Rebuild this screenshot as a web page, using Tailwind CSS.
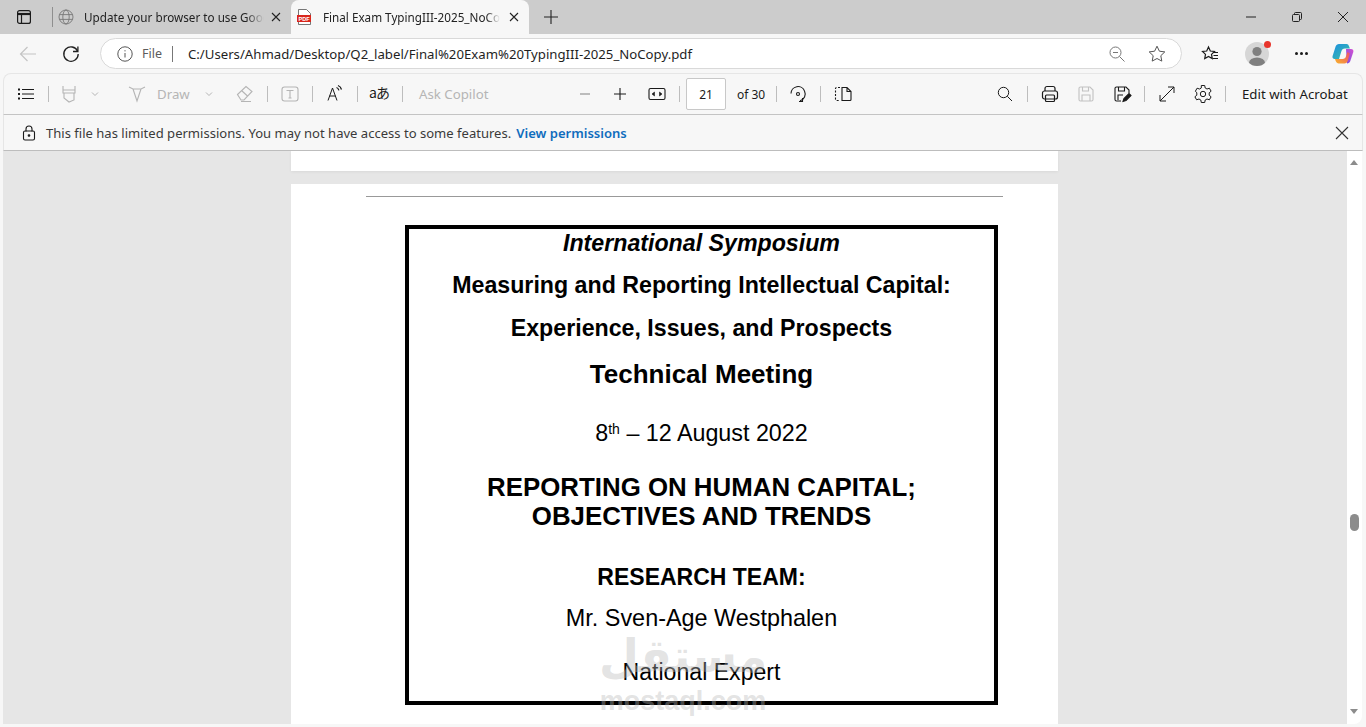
<!DOCTYPE html>
<html>

<head>
    <meta charset="UTF-8">
    <meta name="viewport" content="width=device-width, initial-scale=1.0">
    <title>Final Exam TypingIII-2025_NoCopy.pdf</title>
    <script src="https://cdn.jsdelivr.net/npm/@tailwindcss/browser@4"></script>
</head>

<body class="h-screen overflow-hidden bg-[#f7f7f7] font-['Noto_Sans',sans-serif] text-[#1a1a1a]">
    <div class="relative flex h-[727px] flex-col overflow-hidden">

        <!-- tab strip -->
        <div class="flex h-[34px] shrink-0 items-center bg-[#cccccc]">
            <svg class="ml-[16px] h-[16px] w-[16px]" viewBox="0 0 16 16" fill="none" stroke="#1a1a1a" stroke-width="1.2"><rect x="1.6" y="1.6" width="12.8" height="12.8" rx="2"/><path d="M1.6 5h12.8" stroke-width="2.2"/><path d="M5.5 5v9.4"/></svg>
            <div class="ml-[20px] h-[20px] w-px bg-[#8f8f8f]"></div>
            <svg class="ml-[5px] h-[16px] w-[16px]" viewBox="0 0 16 16" fill="none" stroke="#777" stroke-width="0.9"><circle cx="8" cy="8" r="7"/><ellipse cx="8" cy="8" rx="3.2" ry="7"/><path d="M1.4 5.6h13.2M1.4 10.4h13.2"/></svg>
            <div class="ml-[10px] w-[180px] overflow-hidden whitespace-nowrap text-[11.7px] leading-[16px] text-[#222] [mask-image:linear-gradient(to_right,black_90%,transparent)]">Update your browser to use Google Chrome</div>
            <svg class="ml-[7px] h-[10px] w-[10px]" viewBox="0 0 10 10" stroke="#222" stroke-width="1.1"><path d="M1 1l8 8M9 1l-8 8"/></svg>
            <div class="relative ml-[10px] flex h-[34px] w-[238px] items-center rounded-t-lg bg-[#f7f7f7]">
                <svg class="ml-[6px] h-[16px] w-[14px]" viewBox="0 0 14 16"><path d="M1.5.5h8l4 4v11h-12z" fill="#fff" stroke="#555" stroke-width=".8"/><rect x="0" y="6" width="14" height="7" fill="#d9261c"/><text x="7" y="11.6" text-anchor="middle" font-size="5.6" font-weight="700" font-family="Liberation Sans" fill="#fff">PDF</text></svg>
                <div class="ml-[12px] w-[177px] overflow-hidden whitespace-nowrap text-[11.7px] leading-[16px] text-[#222] [mask-image:linear-gradient(to_right,black_92%,transparent)]">Final Exam TypingIII-2025_NoCopy.pdf</div>
                <svg class="ml-[9px] h-[10px] w-[10px]" viewBox="0 0 10 10" stroke="#222" stroke-width="1.1"><path d="M1 1l8 8M9 1l-8 8"/></svg>
            </div>
            <svg class="ml-[14px] h-[16px] w-[16px]" viewBox="0 0 16 16" stroke="#222" stroke-width="1.1"><path d="M8 1v14M1 8h14"/></svg>
            <div class="ml-auto flex">
                <div class="flex h-[34px] w-[46px] items-center justify-center"><svg class="h-[10px] w-[10px]" viewBox="0 0 10 10" stroke="#222"><path d="M0 5h10"/></svg></div>
                <div class="flex h-[34px] w-[46px] items-center justify-center"><svg class="h-[10px] w-[10px]" viewBox="0 0 10 10" fill="none" stroke="#222"><rect x=".5" y="2.5" width="7" height="7" rx="1"/><path d="M2.5 2.5V1.5a1 1 0 011-1h5a1 1 0 011 1v5a1 1 0 01-1 1h-1"/></svg></div>
                <div class="flex h-[34px] w-[46px] items-center justify-center"><svg class="h-[10px] w-[10px]" viewBox="0 0 10 10" stroke="#222"><path d="M0 0l10 10M10 0L0 10"/></svg></div>
            </div>
        </div>

        <!-- address row -->
        <div class="flex h-[39px] shrink-0 items-center">
            <svg class="ml-[19px] h-[18px] w-[18px]" viewBox="0 0 18 18" fill="none" stroke="#c4c4c4" stroke-width="1.2"><path d="M17 9H1.5M8.500 2L1.5 9l7 7"/></svg>
            <svg class="ml-[25px] h-[18px] w-[18px]" viewBox="0 0 18 18" fill="none" stroke="#1f1f1f" stroke-width="1.3"><path d="M15.6 6.2A7.2 7.2 0 1016.2 9"/><path d="M15.9 1.6v4.900h-4.900"/></svg>
            <div class="ml-[20px] flex h-[31px] w-[1082px] items-center rounded-full border border-[#d9d9d9] bg-white">
                <svg class="ml-[16px] h-[16px] w-[16px]" viewBox="0 0 16 16" fill="none" stroke="#555" stroke-width="1"><circle cx="8" cy="8" r="7.2"/><path d="M8 7v4.500M8 4.200v1.200"/></svg>
                <span class="ml-[9px] pt-[2px] text-[12.5px] text-[#5c5c5c]">File</span>
                <div class="ml-[10px] h-[16px] w-px bg-[#777]"></div>
                <span class="ml-[15px] whitespace-nowrap pt-[2px] text-[13.2px] text-[#1f1f1f]">C:/Users/Ahmad/Desktop/Q2_label/Final%20Exam%20TypingIII-2025_NoCopy.pdf</span>
                <svg class="ml-auto h-[16px] w-[16px]" viewBox="0 0 16 16" fill="none" stroke="#777" stroke-width="1"><circle cx="6.5" cy="6.5" r="5.5"/><path d="M10.500 10.500l5 5M4 6.500h5"/></svg>
                <svg class="ml-[23px] mr-[15px] h-[18px] w-[18px]" viewBox="0 0 18 18" fill="none" stroke="#555" stroke-width="1"><path d="M9 1.200l2.400 5 5.400.7-4 3.800 1 5.400L9 13.500l-4.800 2.600 1-5.400-4-3.800 5.400-.7z"/></svg>
            </div>
            <svg class="ml-[19px] h-[18px] w-[18px]" viewBox="0 0 18 18" fill="none" stroke="#1a1a1a" stroke-width="1.2"><path d="M7.500 2l1.800 4 4.200.5-3 2.900.8 4.200-3.800-2.200-3.800 2.200.8-4.200-3-2.900 4.200-.5z"/><path d="M12.500 7.500H17M12.500 10.500H17M12 13.500h5"/></svg>
            <div class="relative ml-[26px] h-[24px] w-[24px]">
                <svg class="h-[24px] w-[24px] overflow-hidden rounded-full" viewBox="0 0 24 24"><rect width="24" height="24" fill="#d6d6d6"/><circle cx="12" cy="9.500" r="4.600" fill="#808080"/><ellipse cx="12" cy="21" rx="8" ry="5.600" fill="#808080"/></svg>
                <div class="absolute right-[-2px] top-[-1px] h-[7px] w-[7px] rounded-full bg-[#e8352c]"></div>
            </div>
            <div class="ml-[23px] flex h-[18px] w-[18px] items-center justify-center gap-[2px]">
                <div class="h-[3px] w-[3px] rounded-full bg-[#1a1a1a]"></div>
                <div class="h-[3px] w-[3px] rounded-full bg-[#1a1a1a]"></div>
                <div class="h-[3px] w-[3px] rounded-full bg-[#1a1a1a]"></div>
            </div>
            <svg class="ml-[21px] h-[24px] w-[24px]" viewBox="0 0 24 24"><defs><linearGradient id="cpa" x1="0" y1="0" x2="1" y2="1"><stop offset="0" stop-color="#1b8fe0"/><stop offset="1" stop-color="#3fc1a5"/></linearGradient><linearGradient id="cpb" x1="1" y1="0" x2="0" y2="1"><stop offset="0" stop-color="#d64fd0"/><stop offset="1" stop-color="#7a4fe0"/></linearGradient><linearGradient id="cpc" x1="0" y1="1" x2="1" y2="0"><stop offset="0" stop-color="#f8b42c"/><stop offset="1" stop-color="#ee4f6a"/></linearGradient></defs><path d="M8 2h7.500c1.400 0 2 .8 2.400 2l1 2.600h-5c-2 0-3 1-3.600 3L8 17H3.600C2 17 1 15.600 1.600 14l3-9.400C5.200 3 6.300 2 8 2z" fill="url(#cpa)"/><path d="M15 7h5c1.600 0 2.800 1.300 2.300 3l-3 9c-.5 1.500-1.700 2.500-3.300 2.500" fill="url(#cpb)"/><path d="M4 17h7.500c2 0 3-1 3.500-2.800L16.400 10l2.400 1.200-2 7.600c-.5 1.600-1.600 2.700-3.400 2.700H7.500C5.600 21.500 4.500 19 4 17z" fill="url(#cpc)"/></svg>
        </div>

        <!-- pdf toolbar -->
        <div class="mx-[3px] flex h-[42px] shrink-0 items-center rounded-t-lg border-x border-b border-t border-[#e6e6e6] border-b-[#c4c4c4] text-[13.25px]">
            <svg class="ml-[13px] h-[18px] w-[18px]" viewBox="0 0 18 18" stroke="#1a1a1a" stroke-width="1"><path d="M5 4.500h12M5 9h12M5 13.500h12"/><path d="M1 4.500h2M1 9h2M1 13.500h2" stroke-width="1.800"/></svg>
            <div class="ml-[13px] h-[16px] w-px bg-[#bdbdbd]"></div>
            <svg class="ml-[10px] h-[20px] w-[20px]" viewBox="0 0 20 20" fill="none" stroke="#b5b5b5" stroke-width="1.100"><path d="M4 2v7h12V2M4 6h12M5 9v5l5 4 5-2V9"/></svg>
            <svg class="ml-[11px] h-[10px] w-[10px]" viewBox="0 0 10 10" fill="none" stroke="#b5b5b5"><path d="M2 3.500L5 6.500 8 3.500"/></svg>
            <svg class="ml-[27px] h-[20px] w-[20px]" viewBox="0 0 20 20" fill="none" stroke="#b5b5b5" stroke-width="1.100"><path d="M2 3l4 2h8l4-2M6 5l4 12 4-12"/></svg>
            <span class="ml-[10px] w-[32px] pt-[2px] text-[#b5b5b5]">Draw</span>
            <svg class="ml-[15px] h-[10px] w-[10px]" viewBox="0 0 10 10" fill="none" stroke="#b5b5b5"><path d="M2 3.500L5 6.500 8 3.500"/></svg>
            <svg class="ml-[21px] h-[20px] w-[20px]" viewBox="0 0 20 20" fill="none" stroke="#b5b5b5" stroke-width="1.100"><path d="M2.500 10.500L11 2.500l6 5-8 8.500H6zM6.500 6.500l6 5.500M6 17.500h10"/></svg>
            <div class="ml-[12px] h-[16px] w-px bg-[#bdbdbd]"></div>
            <svg class="ml-[12px] h-[20px] w-[20px]" viewBox="0 0 20 20" fill="none" stroke="#b5b5b5" stroke-width="1.100"><rect x="2" y="3" width="16" height="14" rx="2.500"/><path d="M6.500 6.500h7M10 6.500v7.500M8.500 14h3"/></svg>
            <div class="ml-[12px] h-[16px] w-px bg-[#bdbdbd]"></div>
            <svg class="ml-[12px] h-[20px] w-[20px]" viewBox="0 0 20 20" fill="none" stroke="#1a1a1a" stroke-width="1"><path d="M3 16.500L7.500 4l4.500 12.500M4.600 12h5.800"/><path d="M11.500 3.500c1.300.4 2 1.300 2.400 2.800M13 1.500c1.800.6 3 1.900 3.500 4" stroke-width="1.300"/></svg>
            <div class="ml-[12px] h-[16px] w-px bg-[#bdbdbd]"></div>
            <span class="ml-[11px] w-[20px] whitespace-nowrap pb-[3px] font-['Noto_Sans_CJK_JP',sans-serif] text-[14px] tracking-[-1px]">aあ</span>
            <div class="ml-[13px] h-[16px] w-px bg-[#bdbdbd]"></div>
            <span class="ml-[16px] w-[71px] whitespace-nowrap pt-[2px] text-[#b5b5b5]">Ask Copilot</span>
            <svg class="ml-[85px] h-[20px] w-[20px]" viewBox="0 0 20 20" stroke="#8c8c8c" stroke-width="1.100"><path d="M5 10h10"/></svg>
            <svg class="ml-[15px] h-[20px] w-[20px]" viewBox="0 0 20 20" stroke="#1a1a1a" stroke-width="1.100"><path d="M4 10h12M10 4v12"/></svg>
            <svg class="ml-[17px] h-[20px] w-[20px]" viewBox="0 0 20 20" fill="none" stroke="#1a1a1a" stroke-width="1.100"><rect x="2" y="4.500" width="16" height="11" rx="1.500"/><path d="M5 10l2.500-2v4zM15 10l-2.500-2v4z" fill="#1a1a1a" stroke-width=".6"/></svg>
            <div class="ml-[12px] h-[16px] w-px bg-[#bdbdbd]"></div>
            <div class="ml-[6px] flex h-[32px] w-[40px] items-center justify-center rounded-[2px] border border-[#c8c8c8] bg-white pt-[1px] text-[12px]">21</div>
            <span class="ml-[11px] w-[27px] whitespace-nowrap pt-[1px] text-[12px]">of 30</span>
            <div class="ml-[12px] h-[16px] w-px bg-[#bdbdbd]"></div>
            <svg class="ml-[11px] h-[20px] w-[20px]" viewBox="0 0 20 20" fill="none" stroke="#1a1a1a" stroke-width="1.100"><path d="M3 9.500a7 7 0 0113.500-2.500A7 7 0 0112 16.800M14.500 14v3.500H11"/><circle cx="10" cy="10" r="1.500"/></svg>
            <div class="ml-[12px] h-[16px] w-px bg-[#bdbdbd]"></div>
            <svg class="ml-[12px] h-[20px] w-[20px]" viewBox="0 0 20 20" fill="none" stroke="#1a1a1a" stroke-width="1.100"><path d="M7 3.500H3.500a1 1 0 00-1 1v11a1 1 0 001 1H7" stroke-dasharray="2 1.500"/><path d="M9 3.500h5l4 4v8a1 1 0 01-1 1H9zM14 3.500v4h4"/></svg>
            <svg class="ml-[142px] h-[20px] w-[20px]" viewBox="0 0 20 20" fill="none" stroke="#1a1a1a" stroke-width="1"><circle cx="8.500" cy="8.500" r="5.200"/><path d="M12.300 12.300L17 17"/></svg>
            <div class="ml-[12px] h-[16px] w-px bg-[#bdbdbd]"></div>
            <svg class="ml-[12px] h-[20px] w-[20px]" viewBox="0 0 20 20" fill="none" stroke="#1a1a1a" stroke-width="1.200"><path d="M5 7V4.500a2 2 0 012-2h6a2 2 0 012 2V7"/><rect x="2.500" y="7" width="15" height="8" rx="2"/><rect x="5.500" y="11" width="9" height="6.500" rx="1"/></svg>
            <svg class="ml-[16px] h-[20px] w-[20px]" viewBox="0 0 20 20" fill="none" stroke="#c2c2c2" stroke-width="1.100"><path d="M3 4.500a1.500 1.500 0 011.500-1.500H14l3 3v9.500a1.500 1.500 0 01-1.500 1.500h-11A1.500 1.500 0 013 15.500zM6.500 3v4h6V3M6 17v-6h8v6"/></svg>
            <svg class="ml-[16px] h-[20px] w-[20px]" viewBox="0 0 20 20" fill="none" stroke="#1a1a1a" stroke-width="1.100"><path d="M9 17H4.500A1.500 1.500 0 013 15.500v-11A1.500 1.500 0 014.500 3H14l3 3v3M6.500 3v4h6V3M6 16v-5h5"/><path d="M11 17.500l1-3 5-5 2 2-5 5z" fill="#1a1a1a"/></svg>
            <div class="ml-[12px] h-[16px] w-px bg-[#bdbdbd]"></div>
            <svg class="ml-[12px] h-[20px] w-[20px]" viewBox="0 0 20 20" fill="none" stroke="#1a1a1a" stroke-width="1"><path d="M3 17L17 3M11 3h6v6M3 11v6h6"/></svg>
            <svg class="ml-[16px] h-[20px] w-[20px]" viewBox="0 0 20 20" fill="none" stroke="#1a1a1a" stroke-width="1"><path d="M8.300 1.500h3.400l.5 2.500 1.800 1 2.400-.8 1.700 3-1.900 1.600v2.400l1.900 1.600-1.700 3-2.400-.8-1.800 1-.5 2.500H8.300l-.5-2.500-1.800-1-2.400.8-1.700-3 1.900-1.600V8.800L2.400 7.200l1.700-3 2.400.8 1.800-1z"/><circle cx="10" cy="10" r="2.700"/></svg>
            <div class="ml-[12px] h-[16px] w-px bg-[#bdbdbd]"></div>
            <span class="ml-[16px] whitespace-nowrap pt-[2px]">Edit with Acrobat</span>
        </div>

        <!-- permissions bar -->
        <div class="mx-[3px] flex h-[36px] shrink-0 items-center border-x border-b border-[#e6e6e6] border-b-[#bdbdbd] text-[13.05px]">
            <svg class="ml-[18px] h-[16px] w-[14px]" viewBox="0 0 14 16" fill="none" stroke="#1a1a1a" stroke-width="1.100"><path d="M4 6.500V4a3 3 0 016 0v2.500"/><rect x="1.500" y="6" width="11" height="9" rx="1.500"/><circle cx="7" cy="10.500" r=".8" fill="#1a1a1a"/></svg>
            <span class="ml-[10px] whitespace-nowrap pt-[3px] text-[#3a3a3a]">This file has limited permissions. You may not have access to some features.</span>
            <span class="ml-[5px] whitespace-nowrap pt-[3px] font-semibold text-[#0f6cbd]">View permissions</span>
            <svg class="ml-auto mr-[13px] h-[14px] w-[14px]" viewBox="0 0 14 14" stroke="#333" stroke-width="1.100"><path d="M1 1l12 12M13 1L1 13"/></svg>
        </div>

        <!-- document area -->
        <div class="ml-[3px] mr-[4px] flex min-h-0 flex-1 overflow-hidden rounded-br-lg">
            <div class="flex-1 overflow-hidden bg-[#e6e6e6] pl-[288px]">
                <div class="h-[20px] w-[767px] bg-white shadow-[0_1px_3px_rgba(0,0,0,0.06)]"></div>
                <div class="mt-[13px] h-[600px] w-[767px] bg-white px-[75px] pt-[12px]">
                    <div class="h-px w-[637px] bg-[#999]"></div>
                    <div class="ml-[39px] mt-[28px] h-[480px] w-[593px] border-4 border-black text-center font-['Liberation_Sans',sans-serif] text-black">
                        <div class="-mt-[1px] text-[23.2px] font-bold italic leading-[30px]">International Symposium</div>
                        <div class="mt-[12px] text-[23.2px] font-bold leading-[30px]">Measuring and Reporting Intellectual Capital:</div>
                        <div class="mt-[13px] text-[23.2px] font-bold leading-[30px]">Experience, Issues, and Prospects</div>
                        <div class="mt-[16px] text-[26px] font-bold leading-[30px]">Technical Meeting</div>
                        <div class="mt-[29px] text-[23.3px] leading-[30px]">8<sup class="text-[14px]">th</sup> – 12 August 2022</div>
                        <div class="mt-[25px] text-[25.85px] font-bold leading-[29px]">REPORTING ON HUMAN CAPITAL;<br>OBJECTIVES AND TRENDS</div>
                        <div class="mt-[31px] text-[23px] font-bold leading-[30px]">RESEARCH TEAM:</div>
                        <div class="mt-[11px] text-[23.4px] leading-[30px]">Mr. Sven-Age Westphalen</div>
                        <div class="mt-[24px] text-[23.1px] leading-[30px]">National Expert</div>
                    </div>
                </div>
            </div>
            <div class="relative w-[15px] bg-white">
                <div class="absolute left-[3px] top-[9px] h-0 w-0 border-x-[4px] border-b-[5px] border-x-transparent border-b-[#8c8c8c]"></div>
                <div class="absolute left-[3px] top-[363px] h-[17px] w-[9px] rounded-full bg-[#8c8c8c]"></div>
                <div class="absolute bottom-[10px] left-[3px] h-0 w-0 border-x-[4px] border-t-[5px] border-x-transparent border-t-[#8c8c8c]"></div>
            </div>
        </div>
        <div class="h-[3px] shrink-0"></div>

        <!-- watermark -->
        <div class="pointer-events-none absolute left-[590px] top-[626px] w-[186px] text-center font-bold text-[#b8b8b8]/40">
            <div dir="rtl" class="font-['DejaVu_Sans',sans-serif] text-[46px] leading-[60px]">مستقل</div>
            <div class="font-['Liberation_Sans',sans-serif] text-[27px] leading-[30px]">mostaql.com</div>
        </div>
    </div>
</body>

</html>
